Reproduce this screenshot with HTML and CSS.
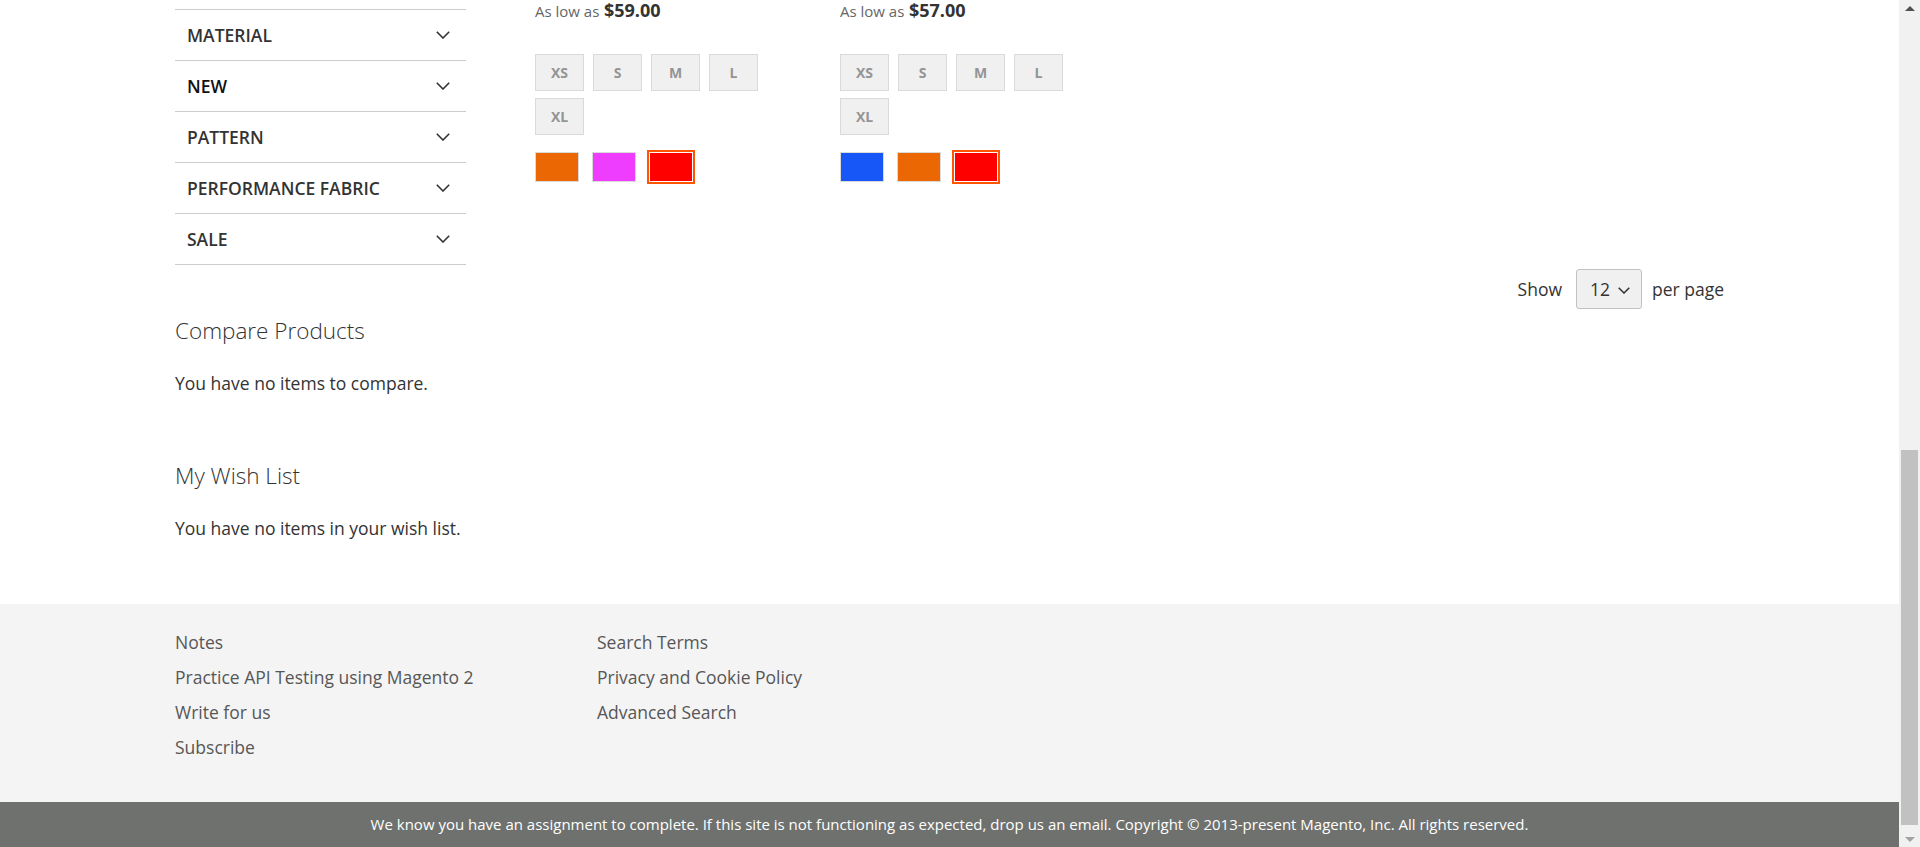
FILE: index.html
```html
<!DOCTYPE html>
<html lang="en">
<head>
<meta charset="utf-8">
<title>Catalog</title>
<link rel="stylesheet" href="styles.css">
</head>
<body>
<div class="page">
  <div class="columns">
    <aside class="sidebar">
      <div class="filter-list">
        <div class="filter-item"><span>Material</span><svg class="chev" width="14" height="8" viewBox="0 0 14 8"><polyline points="0.8,0.8 7,7 13.2,0.8" fill="none" stroke="#333" stroke-width="1.6"/></svg></div>
        <div class="filter-item filter-item-dark"><span>New</span><svg class="chev" width="14" height="8" viewBox="0 0 14 8"><polyline points="0.8,0.8 7,7 13.2,0.8" fill="none" stroke="#333" stroke-width="1.6"/></svg></div>
        <div class="filter-item"><span>Pattern</span><svg class="chev" width="14" height="8" viewBox="0 0 14 8"><polyline points="0.8,0.8 7,7 13.2,0.8" fill="none" stroke="#333" stroke-width="1.6"/></svg></div>
        <div class="filter-item"><span>Performance Fabric</span><svg class="chev" width="14" height="8" viewBox="0 0 14 8"><polyline points="0.8,0.8 7,7 13.2,0.8" fill="none" stroke="#333" stroke-width="1.6"/></svg></div>
        <div class="filter-item"><span>Sale</span><svg class="chev" width="14" height="8" viewBox="0 0 14 8"><polyline points="0.8,0.8 7,7 13.2,0.8" fill="none" stroke="#333" stroke-width="1.6"/></svg></div>
      </div>
      <div class="block block-compare">
        <h2 class="block-title">Compare Products</h2>
        <p class="block-empty">You have no items to compare.</p>
      </div>
      <div class="block block-wishlist">
        <h2 class="block-title">My Wish List</h2>
        <p class="block-empty">You have no items in your wish list.</p>
      </div>
    </aside>
    <main class="main">
      <div class="products">
        <div class="product">
          <div class="price"><span class="price-label">As low as</span> <span class="price-amount">$59.00</span></div>
          <div class="sizes">
            <div class="size">XS</div><div class="size">S</div><div class="size">M</div><div class="size">L</div><div class="size">XL</div>
          </div>
          <div class="colors">
            <div class="swatch swatch-orange"></div><div class="swatch swatch-pink"></div><div class="swatch swatch-red selected"></div>
          </div>
        </div>
        <div class="product">
          <div class="price"><span class="price-label">As low as</span> <span class="price-amount">$57.00</span></div>
          <div class="sizes">
            <div class="size">XS</div><div class="size">S</div><div class="size">M</div><div class="size">L</div><div class="size">XL</div>
          </div>
          <div class="colors">
            <div class="swatch swatch-blue"></div><div class="swatch swatch-orange"></div><div class="swatch swatch-red selected"></div>
          </div>
        </div>
      </div>
      <div class="toolbar">
        <span class="limiter-label">Show</span>
        <div class="limiter-select"><span>12</span><svg width="12" height="7" viewBox="0 0 12 7"><polyline points="0.7,0.7 6,6 11.3,0.7" fill="none" stroke="#333" stroke-width="1.5"/></svg></div>
        <span class="limiter-text">per page</span>
      </div>
    </main>
  </div>
  <footer class="footer">
    <div class="footer-inner">
      <ul class="links">
        <li>Notes</li>
        <li>Practice API Testing using Magento 2</li>
        <li>Write for us</li>
        <li>Subscribe</li>
      </ul>
      <ul class="links">
        <li>Search Terms</li>
        <li>Privacy and Cookie Policy</li>
        <li>Advanced Search</li>
      </ul>
    </div>
  </footer>
  <div class="copyright">We know you have an assignment to complete. If this site is not functioning as expected, drop us an email. Copyright © 2013-present Magento, Inc. All rights reserved.</div>
</div>
<div class="scrollbar">
  <div class="sb-btn"><span class="arrow-up"></span></div>
  <div class="sb-track"><div class="sb-thumb"></div></div>
  <div class="sb-btn"><span class="arrow-down"></span></div>
</div>
</body>
</html>
```

FILE: styles.css
```css
* { box-sizing: border-box; }

body {
  margin: 0;
  height: 847px;
  overflow: hidden;
  display: flex;
  font-family: "Open Sans", "Liberation Sans", sans-serif;
  color: #333;
  background: #fff;
}

.page {
  flex: 1;
  min-width: 0;
  display: flex;
  flex-direction: column;
}

.columns {
  width: 1549px;
  margin: 0 auto;
  display: flex;
  padding-bottom: 63px;
}

/* Sidebar */
.sidebar {
  width: 291px;
  flex-shrink: 0;
  padding-top: 9px;
}

.filter-list {
  border-bottom: 1px solid #ccc;
}

.filter-item {
  height: 51px;
  border-top: 1px solid #ccc;
  display: flex;
  align-items: center;
  justify-content: space-between;
  padding: 0 16px 0 12px;
  font-size: 17.5px;
  font-weight: 600;
  line-height: 26px;
  text-transform: uppercase;
  color: #333;
}

.filter-item-dark { color: #111; }

.chev { display: block; }

.block { margin-top: 52px; }
.block-wishlist { margin-top: 66px; }

.block-title {
  margin: 0;
  font-size: 22.5px;
  font-weight: 300;
  line-height: 28px;
  color: #333;
}

.block-empty {
  margin: 26px 0 0;
  font-size: 17.5px;
  line-height: 25px;
}

/* Main */
.main {
  flex: 1;
  padding-left: 69px;
}

.products {
  display: flex;
}

.product {
  width: 305px;
}

.price {
  font-size: 17.5px;
  line-height: 22px;
  margin-top: -1px;
}

.price-label {
  font-size: 15px;
  color: #666;
}

.price-amount {
  font-weight: 700;
  font-size: 18px;
  color: #333;
}

.sizes {
  margin-top: 32px;
  width: 240px;
  display: flex;
  flex-wrap: wrap;
  gap: 7px 9px;
}

.size {
  width: 49px;
  height: 37px;
  border: 1px solid #dadada;
  background: #f0f0f0;
  color: #949494;
  font-size: 14px;
  font-weight: 700;
  display: flex;
  align-items: center;
  justify-content: center;
}

.colors {
  margin-top: 17px;
  display: flex;
  gap: 13px;
}

.swatch {
  width: 44px;
  height: 30px;
  border: 1px solid #dadada;
}

.swatch.selected {
  outline: 2px solid #ff5501;
  border-color: #fff;
}

.swatch-orange { background: #eb6703; }
.swatch-pink { background: #ef3dff; }
.swatch-red { background: #ff0000; }
.swatch-blue { background: #1857f7; }

.toolbar {
  margin-top: 87px;
  height: 40px;
  display: flex;
  justify-content: flex-end;
  align-items: center;
  font-size: 17.5px;
  color: #333;
}

.limiter-select {
  width: 66px;
  height: 40px;
  margin: 0 10px 0 14px;
  border: 1px solid #c2c2c2;
  border-radius: 3px;
  background: #f0f0f0;
  display: flex;
  align-items: center;
  padding-left: 13px;
  gap: 8px;
}

.limiter-select svg { display: block; margin-top: 2px; }

/* Footer */
.footer {
  background: #f4f4f4;
  height: 198px;
  padding-top: 26px;
}

.footer-inner {
  width: 1549px;
  margin: 0 auto;
  display: flex;
}

.links {
  list-style: none;
  margin: 0;
  padding: 0;
  width: 422px;
}

.links li {
  font-size: 17.5px;
  line-height: 25px;
  margin-bottom: 10px;
  color: #575757;
}

.copyright {
  height: 45px;
  background: #6e716e;
  color: #fff;
  font-size: 15px;
  line-height: 44px;
  text-align: center;
}

/* Scrollbar */
.scrollbar {
  width: 21px;
  flex-shrink: 0;
  background: #f1f1f1;
  display: flex;
  flex-direction: column;
}

.sb-btn {
  height: 21px;
  display: flex;
  align-items: center;
  justify-content: center;
}

.arrow-up {
  width: 0;
  height: 0;
  border-left: 5px solid transparent;
  border-right: 5px solid transparent;
  border-bottom: 5px solid #505050;
  margin-bottom: 4px;
}

.arrow-down {
  width: 0;
  height: 0;
  border-left: 5px solid transparent;
  border-right: 5px solid transparent;
  border-top: 5px solid #a3a3a3;
  margin-top: 6px;
}

.sb-track {
  flex: 1;
  padding: 429px 2px 0;
}

.sb-thumb {
  height: 375px;
  background: #c1c1c1;
}
```
